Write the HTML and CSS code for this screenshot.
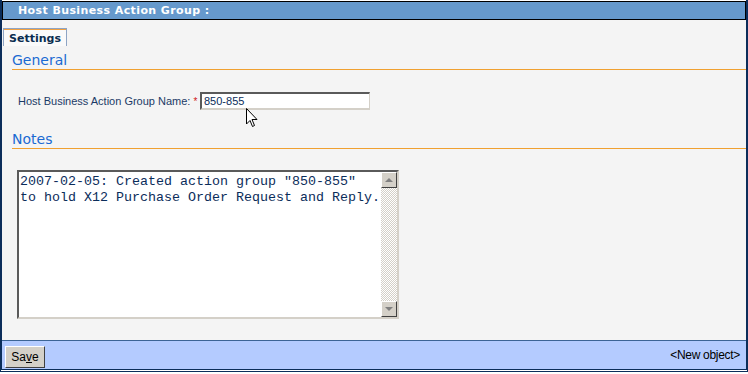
FILE: index.html
```html
<!DOCTYPE html>
<html lang="en">
<head>
    <meta charset="UTF-8">
    <title>Host Business Action Group</title>
    <link rel="stylesheet" href="styles.css">
</head>
<body>
    <div class="window">
        <div class="titlebar">Host Business Action Group :</div>

        <div class="content">
            <div class="tabs">
                <span class="tab">Settings</span>
            </div>

            <h2 class="section">General</h2>
            <div class="field-row">
                <label for="groupName">Host Business Action Group Name: <span class="req">*</span></label>
                <div class="input">850-855</div>
            </div>

            <h2 class="section">Notes</h2>
            <div class="notes">
                <div class="notes-text">2007-02-05: Created action group "850-855"
to hold X12 Purchase Order Request and Reply.</div>
                <div class="scrollbar">
                    <div class="arrow arrow-up"></div>
                    <div class="track"></div>
                    <div class="arrow arrow-down"></div>
                </div>
            </div>

            <!-- mouse pointer over the name field -->
            <svg class="pointer" width="12" height="20" viewBox="0 0 12 20">
                <path d="M0.5 0.5 L0.5 16 L4 12.5 L6.5 18.5 L8.5 17.5 L6 11.5 L11 11.5 Z" fill="#fff" stroke="#000" stroke-width="1"/>
            </svg>
        </div>

        <div class="footer">
            <button type="button" class="btn">Sa<u>v</u>e</button>
            <span class="status">&lt;New object&gt;</span>
        </div>
    </div>
</body>
</html>
```

FILE: styles.css
```css
body {
    margin: 0;
    background: #fff;
    font-family: "DejaVu Sans", Verdana, sans-serif;
}
.window {
    position: relative;
    width: 744px;
    height: 369px;
    border-left: 2px solid #0b2d5a;
    border-right: 2px solid #0b2d5a;
    border-bottom: 3px double #0b2d5a;
    display: flex;
    flex-direction: column;
    box-sizing: content-box;
}
.titlebar {
    margin-top: 1px;
    height: 17px;
    background: #6699cc;
    border: 1px solid #000;
    color: #fff;
    font-weight: bold;
    font-size: 11px;
    line-height: 17px;
    padding-left: 15px;
    letter-spacing: 0.4px;
}
.content {
    flex: 1;
    background: #f4f4f4;
    padding: 7px 0 0 0;
}
.tabs {
    padding-left: 1px;
    height: 20px;
}
.tab {
    display: inline-block;
    height: 17px;
    padding: 0 5px 0 5px;
    background: #fafafa;
    border: 1px solid #8ea4c4;
    border-bottom: none;
    box-shadow: inset 0 1px 0 #f0a040;
    color: #0b2d4f;
    font-weight: bold;
    font-size: 11px;
    line-height: 19px;
}
.section {
    margin: 5px 0 0 10px;
    padding: 0 0 1px 0;
    font-weight: normal;
    font-size: 14px;
    line-height: 16px;
    color: #1a6ad2;
    border-bottom: 1px solid #f0a030;
}
.field-row {
    display: flex;
    align-items: center;
    margin: 21px 0 21px 16px;
    height: 19px;
}
label {
    font-family: "Liberation Sans", Arial, sans-serif;
    font-size: 11px;
    color: #1b3a66;
    width: 182px;
}
.req {
    color: #d01818;
    font-size: 10px;
}
.input {
    width: 165px;
    height: 14px;
    border-top: 2px solid #5a5a5a;
    border-left: 2px solid #5a5a5a;
    border-right: 1px solid #d4d0c8;
    border-bottom: 2px solid #d4d0c8;
    background: #fff;
    padding-left: 2px;
    font-family: "Liberation Sans", Arial, sans-serif;
    font-size: 11px;
    line-height: 14px;
    color: #0b2d5a;
}
.notes {
    display: flex;
    margin: 21px 0 0 15px;
    width: 378px;
    height: 145px;
    border-top: 2px solid #5a5a5a;
    border-left: 2px solid #5a5a5a;
    border-right: 2px solid #d4d0c8;
    border-bottom: 2px solid #d4d0c8;
    background: #fff;
}
.notes-text {
    flex: 1;
    padding: 2px 0 0 1px;
    white-space: pre;
    font-family: "Liberation Mono", "Courier New", monospace;
    font-size: 13.33px;
    line-height: 16px;
    color: #0b2d5a;
}
.scrollbar {
    width: 16px;
    display: flex;
    flex-direction: column;
}
.track {
    flex: 1;
    background: repeating-conic-gradient(#fff 0 25%, #d4d0c8 0 50%) 0 0 / 2px 2px;
}
.arrow {
    height: 16px;
    box-sizing: border-box;
    background: #d4d0c8;
    border-top: 1px solid #fff;
    border-left: 1px solid #fff;
    border-right: 1px solid #404040;
    border-bottom: 1px solid #404040;
    display: flex;
    align-items: center;
    justify-content: center;
}
.arrow::after {
    content: "";
    border-left: 4px solid transparent;
    border-right: 4px solid transparent;
}
.arrow-up::after {
    border-bottom: 4px solid #808080;
}
.arrow-down::after {
    border-top: 4px solid #808080;
}
.pointer {
    position: absolute;
    left: 244px;
    top: 108px;
}
.footer {
    height: 28px;
    background: #b4cbff;
    border-top: 1px solid #3c6496;
    display: flex;
    align-items: center;
    justify-content: space-between;
    padding: 0 6px 0 3px;
}
.btn {
    width: 40px;
    height: 22px;
    margin-top: 4px;
    background: #d4d0c8;
    border: 1px solid;
    border-color: #fff #404040 #404040 #fff;
    font-family: "Liberation Sans", Arial, sans-serif;
    font-size: 12px;
    color: #000;
    padding: 0;
}
.status {
    font-family: "Liberation Sans", Arial, sans-serif;
    font-size: 12px;
    letter-spacing: -0.3px;
    color: #000;
}
```
